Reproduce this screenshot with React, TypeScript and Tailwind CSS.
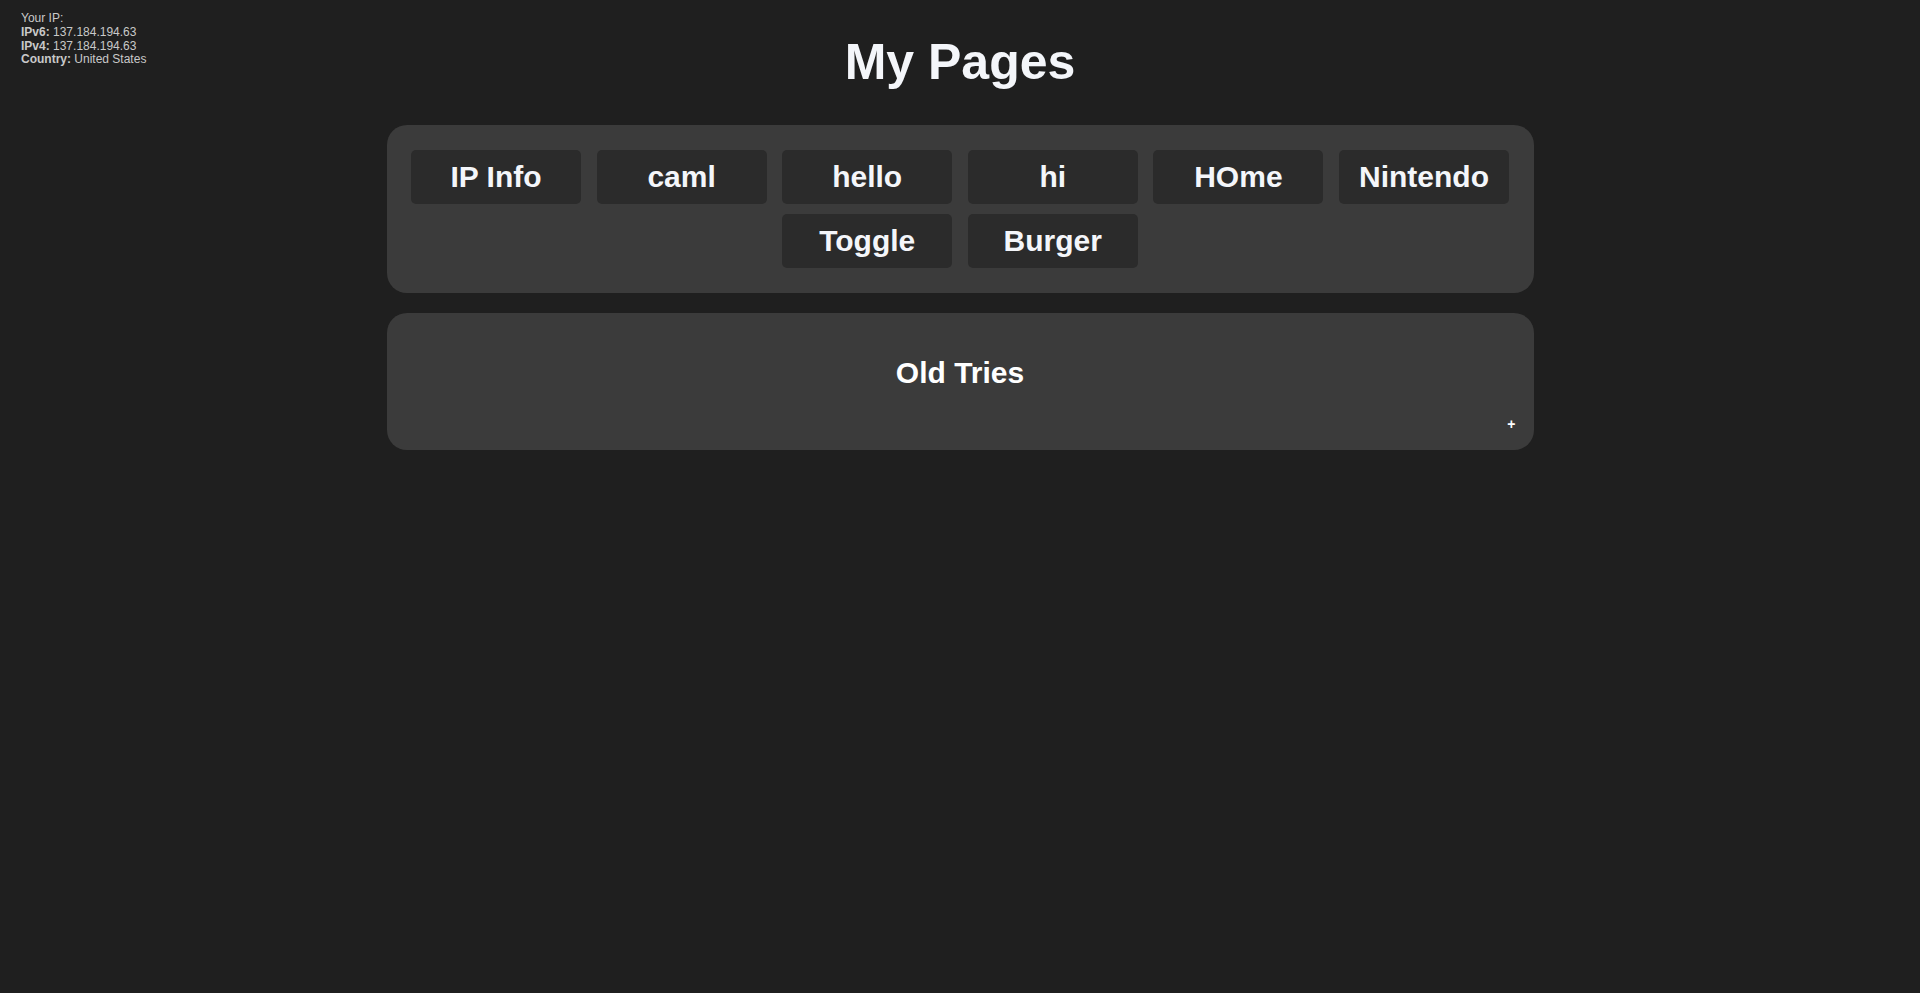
const pages = ['IP Info', 'caml', 'hello', 'hi', 'HOme', 'Nintendo', 'Toggle', 'Burger'];

function IpBox() {
  return (
    <div className="absolute left-[21px] top-[12px] text-[12px] leading-[13.8px] text-[#c9c9c9]">
      <div>Your IP:</div>
      <div>
        <b>IPv6:</b> 137.184.194.63
      </div>
      <div>
        <b>IPv4:</b> 137.184.194.63
      </div>
      <div>
        <b>Country:</b> United States
      </div>
    </div>
  );
}

export default function App() {
  return (
    <div
      className="relative min-h-[993px] w-full bg-[#1f1f1f] text-white"
      style={{ fontFamily: '"Liberation Sans", Arial, sans-serif' }}
    >
      <IpBox />

      <div className="flex flex-col items-center pt-[34px]">
        <h1 className="text-[50px] font-bold leading-[57px] text-[#f4f6fa]">My Pages</h1>

        {/* Page links */}
        <div className="mt-[34px] w-[1147px] rounded-[20px] bg-[#3b3b3b] px-[24px] py-[25px]">
          <div className="flex flex-wrap justify-center gap-x-[15.6px] gap-y-[10px]">
            {pages.map((p) => (
              <button
                key={p}
                className="flex h-[54px] w-[170px] items-center justify-center rounded-[5px] bg-[#2b2b2b] pb-[2px] text-[30px] font-bold text-[#f4f6fa]"
              >
                {p}
              </button>
            ))}
          </div>
        </div>

        {/* Old tries */}
        <div className="mt-[20px] flex h-[137px] w-[1147px] flex-col rounded-[20px] bg-[#3b3b3b] px-[18px] pt-[43px]">
          <h2 className="text-center text-[30px] font-bold leading-[34px] text-white">Old Tries</h2>
          <div className="mt-[26px] flex justify-end">
            <span className="text-[14px] font-bold leading-[16px] text-white">+</span>
          </div>
        </div>
      </div>
    </div>
  );
}
